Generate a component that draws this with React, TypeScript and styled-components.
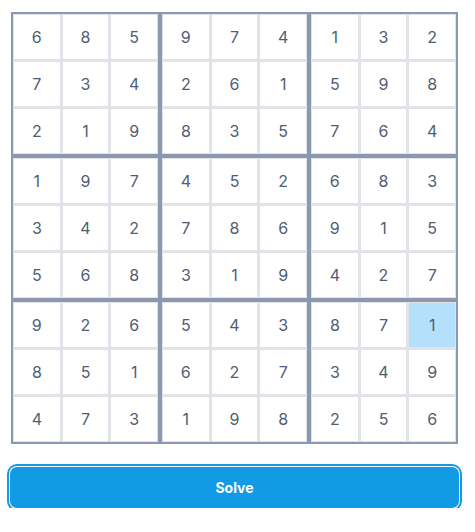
import { FC } from "react"
import styled, { createGlobalStyle } from "styled-components"

const GRID: number[][] = [
  [6, 8, 5, 9, 7, 4, 1, 3, 2],
  [7, 3, 4, 2, 6, 1, 5, 9, 8],
  [2, 1, 9, 8, 3, 5, 7, 6, 4],
  [1, 9, 7, 4, 5, 2, 6, 8, 3],
  [3, 4, 2, 7, 8, 6, 9, 1, 5],
  [5, 6, 8, 3, 1, 9, 4, 2, 7],
  [9, 2, 6, 5, 4, 3, 8, 7, 1],
  [8, 5, 1, 6, 2, 7, 3, 4, 9],
  [4, 7, 3, 1, 9, 8, 2, 5, 6],
]

const SELECTED = { row: 6, col: 8 }
const THREE = [0, 1, 2]

const App: FC = () => {
  return (
    <>
      <GlobalStyle />
      <Page>
        <Board>
          {THREE.flatMap(br =>
            THREE.map(bc => (
              <Box key={`${br}-${bc}`}>
                {THREE.flatMap(r =>
                  THREE.map(c => {
                    const row = br * 3 + r
                    const col = bc * 3 + c
                    const selected = row === SELECTED.row && col === SELECTED.col
                    return (
                      <Cell key={`${row}-${col}`} $selected={selected}>
                        {GRID[row][col]}
                      </Cell>
                    )
                  })
                )}
              </Box>
            ))
          )}
        </Board>
        <SolveButton type="button">Solve</SolveButton>
      </Page>
    </>
  )
}
export default App

const GlobalStyle = createGlobalStyle`
  html, body {
    margin: 0;
    padding: 0;
    background: #ffffff;
  }
  body {
    font-family: Inter, "Liberation Sans", sans-serif;
  }
`
const Page = styled.div`
  width: 449px;
  padding: 12px 0 0 10px;
  display: flex;
  flex-direction: column;
  align-items: center;
  gap: 23px;
`
const Board = styled.div`
  width: 447px;
  display: grid;
  grid-template-columns: repeat(3, 1fr);
`
// each 3x3 block: thick slate frame, light grey gutters between cells
const Box = styled.div`
  border: 2px solid #8a99b0;
  background-color: #e1e3e9;
  padding: 1px;
  display: grid;
  grid-template-columns: repeat(3, 1fr);
  gap: 3px;
`
const Cell = styled.div<{ $selected: boolean }>`
  height: 44px;
  display: flex;
  align-items: center;
  justify-content: center;
  font-size: 16px;
  color: #4f5d75;
  background-color: ${({ $selected }) => ($selected ? "#b4e0fc" : "#ffffff")};
`
const SolveButton = styled.button`
  width: 449px;
  height: 41px;
  border: none;
  border-radius: 7px;
  background-color: #129be4;
  color: #ffffff;
  font-family: Inter, "Liberation Sans", sans-serif;
  font-size: 14px;
  font-weight: 700;
  box-shadow: 0 0 0 1px #ffffff, 0 0 0 3px #129be4;
  cursor: pointer;
`
